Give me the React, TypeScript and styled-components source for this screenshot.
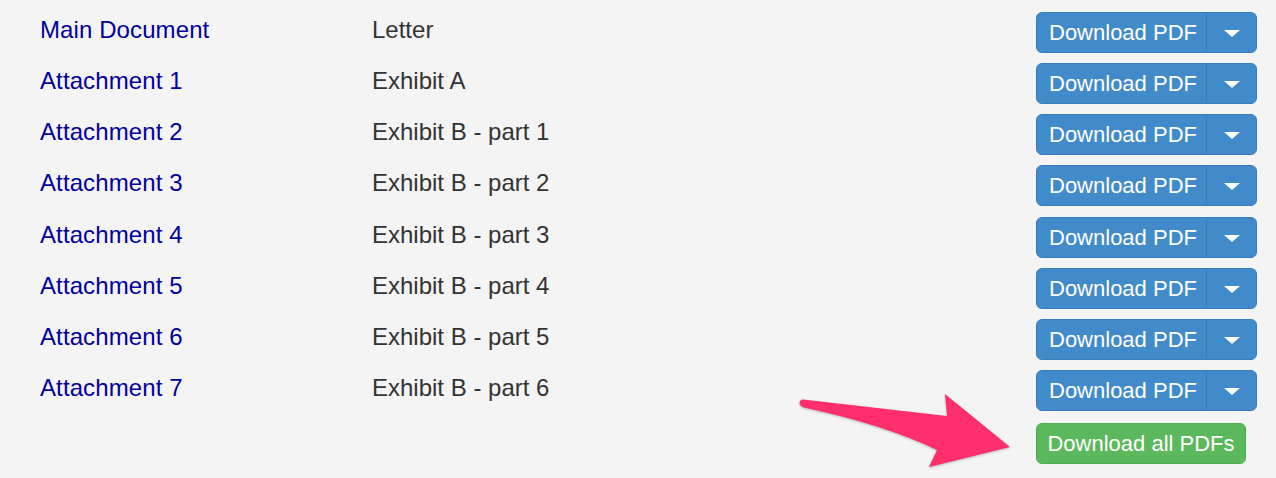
import React from "react";
import styled, { createGlobalStyle } from "styled-components";

const Global = createGlobalStyle`
  html, body { margin: 0; padding: 0; background: #f4f4f4; }
  body { font-family: "Liberation Sans", Arial, Helvetica, sans-serif; }
`;

const Page = styled.div`
  position: relative;
  width: 1276px;
  height: 478px;
  box-sizing: border-box;
  padding: 12px 19px 0 40px;
  background: #f4f4f4;
  overflow: hidden;
`;

const Grid = styled.div`
  display: grid;
  grid-template-columns: 332px 1fr auto;
  row-gap: 10.15px;
  align-items: start;
`;

const Cell = styled.div`
  font-size: 24px;
  line-height: 34px;
  padding-top: 1px;
  white-space: nowrap;
`;

const DocLink = styled.a`
  color: #00009c;
  text-decoration: none;
  cursor: pointer;
  letter-spacing: 0.1px;
`;

const Desc = styled(Cell)`
  color: #333333;
`;

const SplitGroup = styled.div`
  display: inline-flex;
  justify-self: end;
`;

const Btn = styled.button<{ $variant?: "primary" | "success" }>`
  font-family: "Liberation Sans", Arial, Helvetica, sans-serif;
  font-size: 22px;
  line-height: 31px;
  height: 41px;
  box-sizing: border-box;
  padding: 4px 12px;
  color: #ffffff;
  border: 1px solid ${(p) => (p.$variant === "success" ? "#4cae4c" : "#357ebd")};
  background: ${(p) => (p.$variant === "success" ? "#5cb85c" : "#428bca")};
  border-radius: 6px;
  cursor: pointer;
  white-space: nowrap;
`;

const MainBtn = styled(Btn)`
  border-top-right-radius: 0;
  border-bottom-right-radius: 0;
  width: 171px;
`;

const CaretBtn = styled(Btn)`
  border-top-left-radius: 0;
  border-bottom-left-radius: 0;
  margin-left: -1px;
  width: 51px;
  display: flex;
  align-items: center;
  justify-content: center;
  padding: 0;
`;

const Caret = styled.span`
  display: block;
  width: 0;
  height: 0;
  border-left: 8px solid transparent;
  border-right: 8px solid transparent;
  border-top: 7px solid #ffffff;
  margin-top: 2px;
`;

const AllRow = styled.div`
  grid-column: 3;
  justify-self: start;
  margin-top: 2px;
`;

const AllBtn = styled(Btn)`
  width: 210px;
  padding: 4px 0;
  text-align: center;
`;

const Arrow = styled.svg`
  position: absolute;
  left: 790px;
  top: 385px;
  overflow: visible;
  filter: drop-shadow(0 1px 1px rgba(0, 0, 0, 0.25));
`;

const rows = [
  ["Main Document", "Letter"],
  ["Attachment 1", "Exhibit A"],
  ["Attachment 2", "Exhibit B - part 1"],
  ["Attachment 3", "Exhibit B - part 2"],
  ["Attachment 4", "Exhibit B - part 3"],
  ["Attachment 5", "Exhibit B - part 4"],
  ["Attachment 6", "Exhibit B - part 5"],
  ["Attachment 7", "Exhibit B - part 6"],
];

export default function App() {
  return (
    <>
      <Global />
      <Page>
        <Grid>
          {rows.map(([name, desc]) => (
            <React.Fragment key={name}>
              <Cell>
                <DocLink>{name}</DocLink>
              </Cell>
              <Desc>{desc}</Desc>
              <SplitGroup>
                <MainBtn $variant="primary">Download PDF</MainBtn>
                <CaretBtn $variant="primary">
                  <Caret />
                </CaretBtn>
              </SplitGroup>
            </React.Fragment>
          ))}
          <AllRow>
            <AllBtn $variant="success">Download all PDFs</AllBtn>
          </AllRow>
        </Grid>
        <Arrow width="232" height="90" viewBox="0 0 232 90">
          <path
            d="M 13 14.5 L 157 31 L 155 9 L 220 62 L 139 82 L 147 65 Q 95 40 16 23 Q 10 21.5 9.5 18.5 Q 10 14 13 14.5 Z"
            fill="#ff2e6c"
          />
        </Arrow>
      </Page>
    </>
  );
}
